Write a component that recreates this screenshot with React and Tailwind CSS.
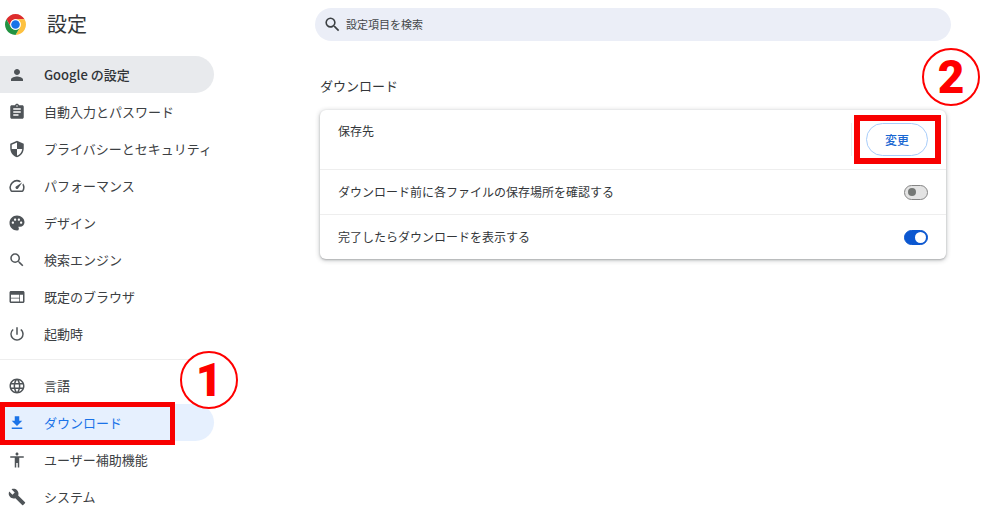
import { useState } from "react";
import {
  MdPerson,
  MdAssignment,
  MdSecurity,
  MdSpeed,
  MdPalette,
  MdSearch,
  MdWeb,
  MdPowerSettingsNew,
  MdLanguage,
  MdFileDownload,
  MdAccessibility,
  MdBuild,
} from "react-icons/md";

const mainItems = [
  { label: "Google の設定", icon: MdPerson, highlighted: true },
  { label: "自動入力とパスワード", icon: MdAssignment },
  { label: "プライバシーとセキュリティ", icon: MdSecurity },
  { label: "パフォーマンス", icon: MdSpeed },
  { label: "デザイン", icon: MdPalette },
  { label: "検索エンジン", icon: MdSearch },
  { label: "既定のブラウザ", icon: MdWeb },
  { label: "起動時", icon: MdPowerSettingsNew },
];

const extraItems = [
  { label: "言語", icon: MdLanguage },
  { label: "ダウンロード", icon: MdFileDownload, current: true },
  { label: "ユーザー補助機能", icon: MdAccessibility },
  { label: "システム", icon: MdBuild },
];

function ChromeLogo() {
  return (
    <svg viewBox="0 0 48 48" className="size-[21px] shrink-0" aria-hidden="true">
      <path d="M24 12h20.78A24 24 0 0 0 3.22 12l10.39 18A12 12 0 0 1 24 12z" fill="#dd2c2c" />
      <path d="M34.39 30 24 48A24 24 0 0 0 44.78 12H24a12 12 0 0 1 10.39 18z" fill="#fdc140" />
      <path d="M13.61 30 3.22 12A24 24 0 0 0 24 48l10.39-18a12 12 0 0 1-20.78 0z" fill="#229342" />
      <circle cx="24" cy="24" r="12" fill="#fff" />
      <circle cx="24" cy="24" r="9.8" fill="#1a73e8" />
    </svg>
  );
}

function StepBadge({ number, className }) {
  return (
    <span
      className={`pointer-events-none absolute z-10 flex size-[58px] items-center justify-center rounded-full border-2 border-[#ff0000] bg-white font-[Roboto,sans-serif] text-[46px] leading-none font-black text-[#ff0000] ${className}`}
    >
      {number}
    </span>
  );
}

function NavItem({ item }) {
  const Icon = item.icon;
  let tone = "text-[#3c4043]";
  let iconTone = "text-[#4f5458]";
  if (item.highlighted) tone = "bg-[#e8eaed] font-medium text-[#303438]";
  if (item.current) {
    tone = "bg-[#e6f0fe] text-[#1a73e8]";
    iconTone = "text-[#1a73e8]";
  }
  return (
    <li className="relative">
      <a
        href="#"
        aria-current={item.current ? "page" : undefined}
        className={`flex h-[37px] items-center gap-[18px] rounded-r-full pl-2 text-[13px] whitespace-nowrap ${tone}`}
      >
        <Icon className={`size-[18px] shrink-0 ${iconTone}`} aria-hidden="true" />
        {item.label}
      </a>
      {item.current && (
        <>
          <span className="pointer-events-none absolute -top-0.5 left-0 h-[43px] w-[175px] border-5 border-[#f80000]" />
          <StepBadge number="1" className="-top-[53px] left-[180px]" />
        </>
      )}
    </li>
  );
}

function ToggleRow({ label, id, initial }) {
  const [on, setOn] = useState(initial);
  return (
    <div className="flex h-[45px] items-center justify-between border-t border-[#eeeeee] px-[18px]">
      <label htmlFor={id}>{label}</label>
      <input
        id={id}
        type="checkbox"
        role="switch"
        checked={on}
        onChange={(e) => setOn(e.target.checked)}
        className="flex h-[15px] w-6 shrink-0 appearance-none items-center rounded-full border border-[#858585] bg-[#e3e3e3] pl-[3px] before:size-2 before:rounded-full before:bg-[#747775] checked:justify-end checked:border-[#0b57d0] checked:bg-[#0b57d0] checked:pr-px checked:before:size-[11px] checked:before:bg-white"
      />
    </div>
  );
}

export default function App() {
  return (
    <div className="flex h-screen overflow-hidden bg-white font-['Noto_Sans_CJK_JP',sans-serif] text-[#333639]">
      <aside className="w-[214px] shrink-0">
        <header className="flex h-14 items-start gap-[21px] pt-2 pl-[5px]">
          <div className="flex h-8 items-center">
            <ChromeLogo />
          </div>
          <h1 className="text-xl leading-8">設定</h1>
        </header>
        <nav aria-label="設定">
          <ul>
            {mainItems.map((item) => (
              <NavItem key={item.label} item={item} />
            ))}
          </ul>
          <hr className="my-[7px] border-[#eeeeee]" />
          <ul>
            {extraItems.map((item) => (
              <NavItem key={item.label} item={item} />
            ))}
          </ul>
        </nav>
      </aside>

      <main className="min-w-0 flex-1 pt-2 pr-[49px] pl-[101px]">
        <div className="flex h-[33px] items-center gap-1 rounded-full bg-[#ebeef7] px-2">
          <MdSearch className="size-[19px] shrink-0 text-[#3c4043]" aria-hidden="true" />
          <input
            type="search"
            aria-label="設定項目を検索"
            placeholder="設定項目を検索"
            className="min-w-0 flex-1 bg-transparent text-[11px] outline-none placeholder:text-[#44474a]"
          />
        </div>

        <section className="px-[5px] pt-[35px]">
          <h2 className="text-[13px] leading-5">ダウンロード</h2>
          <div className="mt-3.5 rounded-md bg-white text-xs shadow-[0_1px_4px_1px_rgba(60,64,67,0.22),0_1px_2px_rgba(60,64,67,0.3)]">
            <div className="flex h-[59px] items-start justify-between px-[18px] pt-[13px]">
              <span className="leading-4">保存先</span>
              <div className="relative border-l border-[#ececec] pl-3.5">
                <button
                  type="button"
                  className="block h-[33px] w-[62px] rounded-full border border-[#a8cdfa] font-medium text-[#1967d2]"
                >
                  変更
                </button>
                <span className="pointer-events-none absolute -top-2 -right-[13px] h-[49px] w-[87px] border-6 border-[#f80000]" />
                <StepBadge number="2" className="-top-[75px] -right-[52px]" />
              </div>
            </div>
            <ToggleRow
              id="ask-location"
              label="ダウンロード前に各ファイルの保存場所を確認する"
              initial={false}
            />
            <ToggleRow
              id="show-finished"
              label="完了したらダウンロードを表示する"
              initial={true}
            />
          </div>
        </section>
      </main>
    </div>
  );
}
